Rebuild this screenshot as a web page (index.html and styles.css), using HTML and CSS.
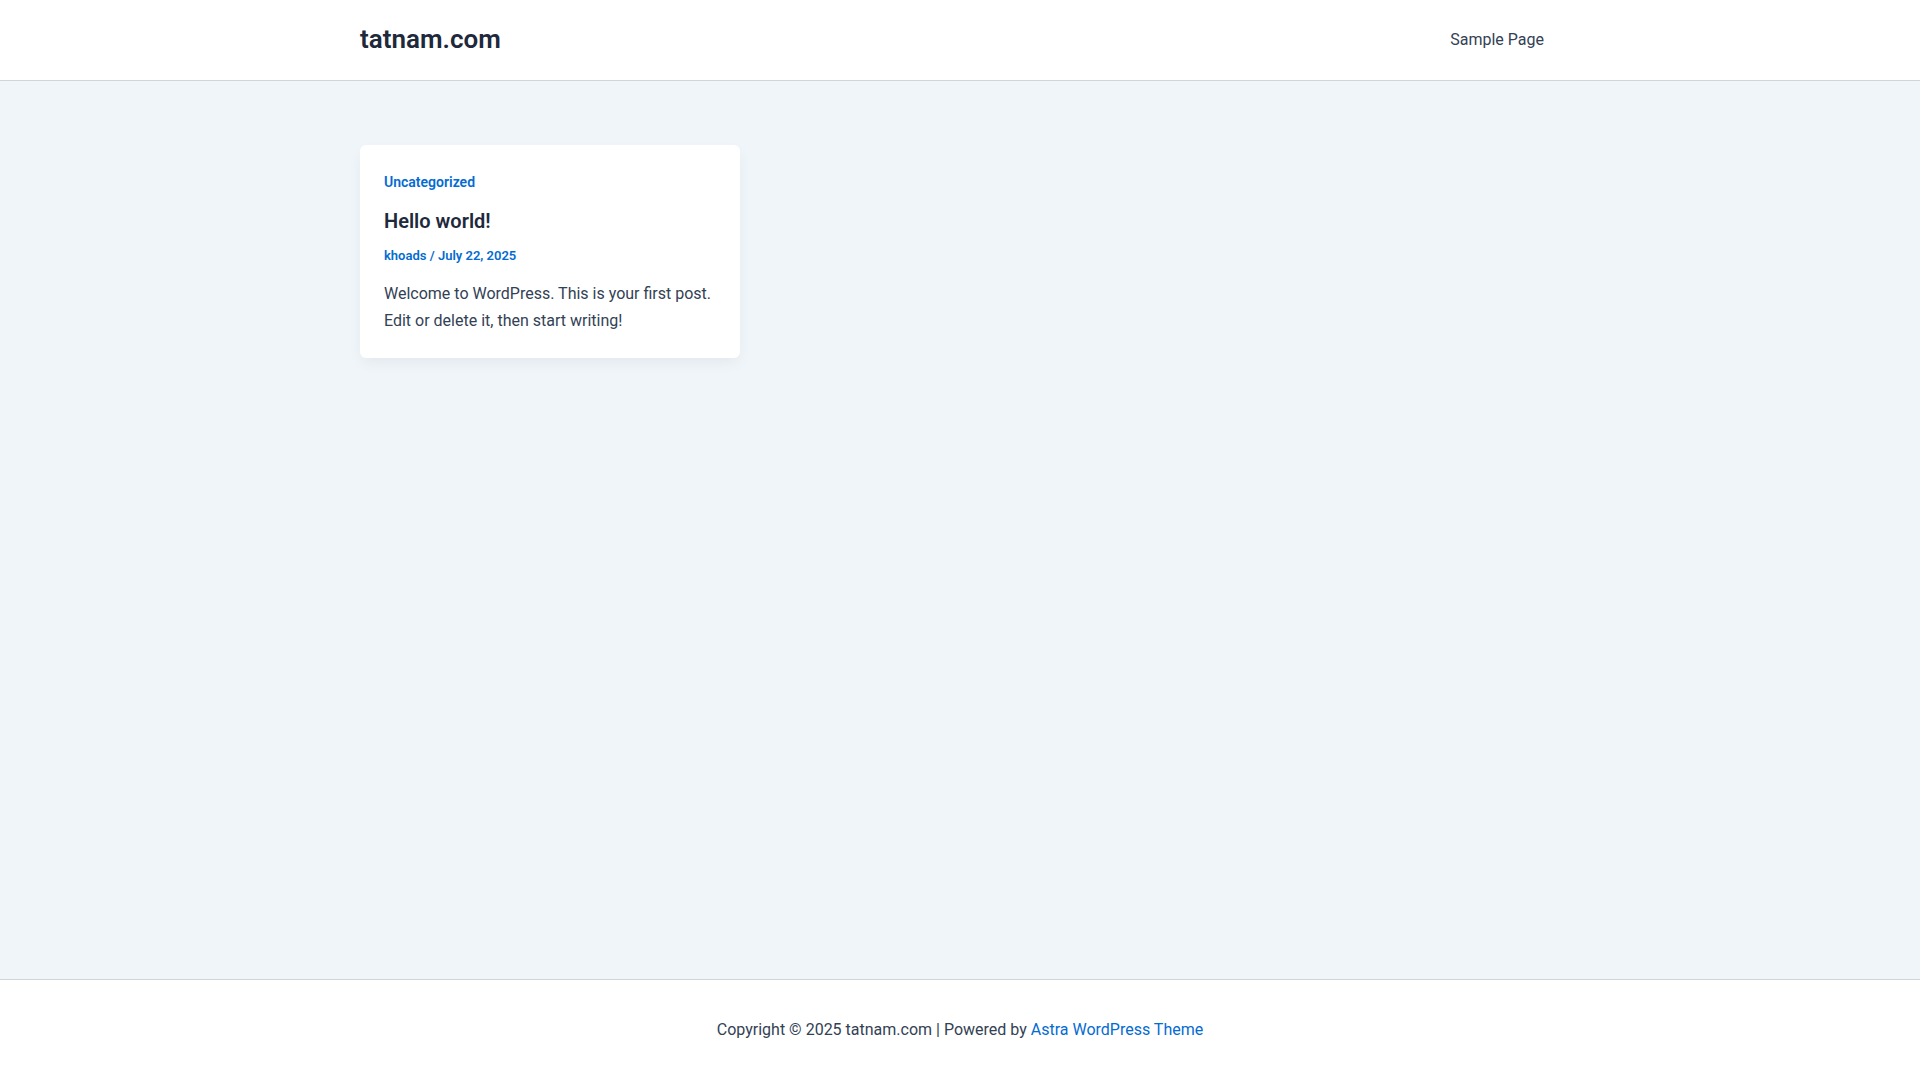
FILE: index.html
```html
<!DOCTYPE html>
<html lang="en">
<head>
<meta charset="utf-8">
<title>tatnam.com</title>
<link rel="stylesheet" href="styles.css">
</head>
<body>
<div class="page">
  <header class="site-header">
    <div class="container header-inner">
      <a class="site-title" href="#">tatnam.com</a>
      <nav class="main-nav">
        <a class="menu-link" href="#">Sample Page</a>
      </nav>
    </div>
  </header>
  <main class="site-content">
    <div class="container">
      <div class="posts-grid">
        <article class="post-card">
          <div class="post-cat"><a href="#">Uncategorized</a></div>
          <h2 class="post-title"><a href="#">Hello world!</a></h2>
          <div class="post-meta"><a href="#">khoads</a> / <a href="#">July 22, 2025</a></div>
          <p class="post-excerpt">Welcome to WordPress. This is your first post. Edit or delete it, then start writing!</p>
        </article>
      </div>
    </div>
  </main>
  <footer class="site-footer">
    <div class="container footer-inner">
      Copyright © 2025 tatnam.com | Powered by <a href="#">Astra WordPress Theme</a>
    </div>
  </footer>
</div>
</body>
</html>
```
FILE: styles.css
```css
* { box-sizing: border-box; }
html, body { margin: 0; padding: 0; }
body {
  font-family: Roboto, "Liberation Sans", sans-serif;
  font-size: 16px;
  line-height: 1.7;
  color: #334155;
  background: #f0f5fa;
}
a { text-decoration: none; color: #046bd2; }
.page {
  min-height: 100vh;
  display: flex;
  flex-direction: column;
}
.container {
  width: 1200px;
  margin: 0 auto;
}
.site-header {
  background: #ffffff;
  border-bottom: 1px solid #d1d5db;
}
.header-inner {
  height: 80px;
  display: flex;
  align-items: center;
  justify-content: space-between;
}
.site-title {
  font-size: 26px;
  font-weight: 600;
  color: #1e293b;
  line-height: 1.2;
}
.menu-link {
  color: #334155;
  font-size: 16px;
  padding: 0 16px;
  line-height: 1;
  display: block;
}
.site-content {
  flex: 1;
  padding-top: 64px;
}
.posts-grid {
  display: grid;
  grid-template-columns: 380px;
}
.post-card {
  background: #ffffff;
  border-radius: 6px;
  box-shadow: 0 6px 15px -2px rgba(16, 24, 40, 0.06);
  padding: 24px;
}
.post-cat {
  font-size: 14px;
  font-weight: 600;
  line-height: 1.2;
  margin-top: 5px;
}
.post-title {
  margin: 17px 0 0;
  font-size: 20px;
  font-weight: 600;
  line-height: 1.3;
}
.post-title a { color: #1e293b; }
.post-meta {
  font-size: 13px;
  font-weight: 600;
  color: #046bd2;
  line-height: 1.2;
  margin-top: 14px;
}
.post-excerpt {
  margin: 17px 0 0;
  font-size: 16px;
  line-height: 27px;
}
.site-footer {
  background: #ffffff;
  border-top: 1px solid #d1d5db;
  height: 101px;
}
.footer-inner {
  text-align: center;
  padding-top: 38px;
  font-size: 16px;
  line-height: 24px;
}
```
